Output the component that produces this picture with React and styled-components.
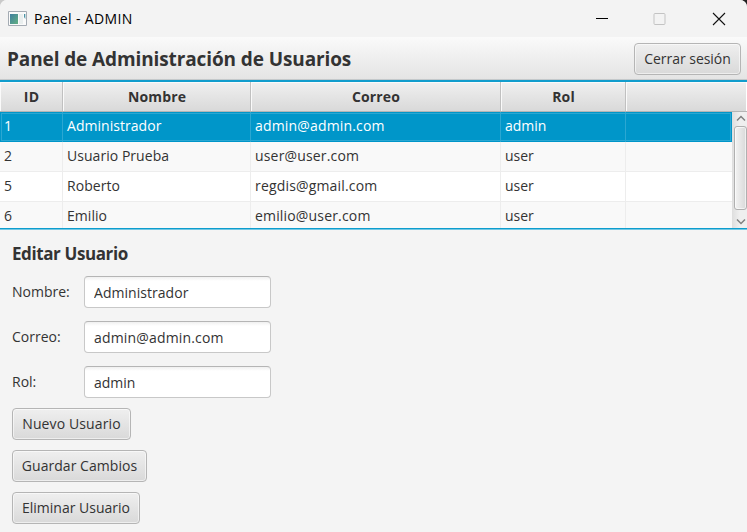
import React from "react";
import styled, { createGlobalStyle } from "styled-components";

const Global = createGlobalStyle`
  * { box-sizing: border-box; }
  html, body { margin: 0; padding: 0; background: #fff; overflow: hidden; }
  button, input { font: inherit; color: inherit; letter-spacing: inherit; }
`;

const Window = styled.div`
  width: 747px;
  height: 532px;
  display: flex;
  flex-direction: column;
  overflow: hidden;
  background: #f4f4f4;
  border-radius: 7px 7px 0 0;
  font-family: "Open Sans", "Noto Sans", sans-serif;
  font-size: 14px;
  letter-spacing: 0;
  color: #333;
  white-space: nowrap;
`;

const Backdrop = styled.div`
  background: linear-gradient(90deg, #c9c9c9 50%, #222 50%);
`;

const TitleBar = styled.header`
  display: flex;
  align-items: center;
  height: 37px;
  flex: none;
  padding-left: 8px;
  background: #f3f3f3;
  color: #000;
`;

const WindowTitle = styled.span`
  flex: 1;
  margin-left: 7px;
  line-height: 20px;
  letter-spacing: 0.35px;
`;

const WindowControls = styled.div`
  display: flex;
  padding-right: 1px;
  svg { display: block; width: 58.5px; height: 36px; }
`;

const ToolBar = styled.div`
  display: flex;
  justify-content: space-between;
  align-items: center;
  height: 43px;
  flex: none;
  padding: 1px 6px 0 7px;
  background: linear-gradient(#fafafa, #e4e4e4);
  border-bottom: 1px solid #c4c8ca;
`;

const Heading = styled.h1`
  margin: 0;
  font-size: 19px;
  line-height: 26px;
  font-weight: 700;
  letter-spacing: -0.11px;
`;

const Button = styled.button`
  width: ${(p) => p.$w}px;
  height: 32px;
  padding: 0 0 1px;
  border: 1px solid #b5b5b5;
  border-radius: 4px;
  background: linear-gradient(#efefef, #d9d9d9);
  box-shadow: inset 0 0 0 1px rgba(255, 255, 255, 0.55);
  letter-spacing: ${(p) => p.$ls ?? 0}px;
`;

const Table = styled.section`
  height: 149px;
  flex: none;
  display: flex;
  flex-direction: column;
  margin-bottom: 1px;
  border-top: 2px solid #119dcd;
  border-bottom: 1px solid #0d9dce;
  box-shadow: 0 1px 0 #74c8e4;
  background: #fff;
`;

const columns = "63px 188px 250px 125px 1fr";

const HeaderRow = styled.div`
  display: grid;
  grid-template-columns: ${columns};
  height: 30px;
  flex: none;
  border-bottom: 1px solid #b5b5b5;
  background: linear-gradient(#f0f0f0, #d9d9d9);
`;

const HeaderCell = styled.div`
  display: flex;
  align-items: center;
  justify-content: center;
  font-weight: 700;
  border-right: 1px solid #c0c0c0;
  box-shadow: inset 1px 1px 0 #fafafa;
  padding-left: 1px;
  letter-spacing: 0.15px;
  &:last-child { border-right-color: #fff; }
`;

const TableBody = styled.div`
  flex: 1;
  min-height: 0;
  display: flex;
`;

const Rows = styled.div`
  flex: 1;
  overflow: hidden;
`;

const Row = styled.div`
  display: grid;
  grid-template-columns: ${columns};
  height: 30px;
  background: ${(p) => (p.$selected ? "#0096c9" : p.$odd ? "#f9f9f9" : "#fff")};
  color: ${(p) => (p.$selected ? "#fff" : "#333")};
  border-bottom: ${(p) => (p.$selected ? "0" : "1px solid #ededed")};
  box-shadow: ${(p) => (p.$selected ? "inset 0 0 0 1px #0096c9, inset 0 0 0 2px #2ba7d2" : "none")};
  --rule: ${(p) => (p.$selected ? "#2ba7d2" : "#ededed")};
`;

const Cell = styled.div`
  padding-left: 4px;
  line-height: 27px;
  border-right: 1px solid var(--rule);
  letter-spacing: ${(p) => p.$ls ?? 0}px;
  &:last-child { border-right: 0; }
`;

const ScrollBar = styled.div`
  width: 15px;
  display: flex;
  flex-direction: column;
  align-items: stretch;
  background: linear-gradient(90deg, #dedede, #efefef 50%);
  padding-left: 2px;
  svg { display: block; width: 13px; }
`;

const Thumb = styled.div`
  flex: 1;
  border: 1px solid #b0b0b0;
  border-radius: 3px;
  background: linear-gradient(90deg, #f3f3f3, #d9d9d9);
  box-shadow: inset 0 0 0 1px rgba(255, 255, 255, 0.6);
`;

const Editor = styled.form`
  display: flex;
  flex-direction: column;
  align-items: flex-start;
  padding: 11px 12px 0;
`;

const SubHeading = styled.h2`
  margin: 0 0 9px;
  font-size: 17px;
  line-height: 26px;
  font-weight: 700;
  letter-spacing: -0.4px;
`;

const Fields = styled.div`
  display: grid;
  grid-template-columns: 72px 187px;
  row-gap: 13px;
  margin-bottom: 10px;
`;

const Label = styled.label`
  line-height: 31px;
`;

const Input = styled.input`
  width: 187px;
  height: 32px;
  padding: 1px 9px 0;
  border: 1px solid #c8c8c8;
  border-top-color: #b5b5b5;
  border-radius: 4px;
  outline: 0;
  background: linear-gradient(#f0f0f0, #fff 4px);
  letter-spacing: ${(p) => p.$ls ?? 0}px;
`;

const Actions = styled.div`
  display: flex;
  flex-direction: column;
  align-items: flex-start;
  gap: 10px;
`;

const users = [
  ["1", "Administrador", "admin@admin.com", "admin"],
  ["2", "Usuario Prueba", "user@user.com", "user"],
  ["5", "Roberto", "regdis@gmail.com", "user"],
  ["6", "Emilio", "emilio@user.com", "user"],
];

const columnSpacing = [0, 0.04, 0.17, 0];

const AppIcon = () => (
  <svg width="19" height="16" viewBox="0 0 19 16">
    <defs>
      <linearGradient id="pane" x1="0" y1="0" x2="1" y2="1">
        <stop offset="0" stopColor="#3f7f9f" />
        <stop offset="1" stopColor="#62b082" />
      </linearGradient>
    </defs>
    <path d="M.5.5h18v14H.5z" fill="#fafafa" stroke="#a4abb3" />
    <path d="M2 3h8v10H2z" fill="url(#pane)" />
    <path d="M11 3h4v10h-4z" fill="#e9eeee" />
    <path d="M16 3h1.3v5l-1.3-2z" fill="#4a93a5" />
  </svg>
);

export default function App() {
  return (
    <Backdrop>
      <Global />
      <Window>
        <TitleBar>
          <AppIcon />
          <WindowTitle>Panel - ADMIN</WindowTitle>
          <WindowControls>
            <svg viewBox="0 0 58.5 36"><path d="M25 17.5h12" stroke="#000" /></svg>
            <svg viewBox="0 0 58.5 36"><rect x="25" y="12.5" width="11" height="11" rx="1" fill="none" stroke="#c3c3c3" /></svg>
            <svg viewBox="0 0 58.5 36"><path d="M25 12l12 12M37 12L25 24" stroke="#111" strokeWidth="1.1" /></svg>
          </WindowControls>
        </TitleBar>
        <ToolBar>
          <Heading>Panel de Administración de Usuarios</Heading>
          <Button $w={107} $ls={-0.03}>Cerrar sesión</Button>
        </ToolBar>
        <Table>
          <HeaderRow>
            <HeaderCell>ID</HeaderCell>
            <HeaderCell>Nombre</HeaderCell>
            <HeaderCell>Correo</HeaderCell>
            <HeaderCell>Rol</HeaderCell>
            <HeaderCell />
          </HeaderRow>
          <TableBody>
            <Rows>
              {users.map((user, i) => (
                <Row key={user[0]} $selected={i === 0} $odd={i % 2 === 1}>
                  {user.map((value, j) => (
                    <Cell key={j} $ls={columnSpacing[j]}>{value}</Cell>
                  ))}
                  <Cell />
                </Row>
              ))}
            </Rows>
            <ScrollBar>
              <svg height="14" viewBox="0 0 13 14"><path d="M3 8.5l4-4 4 4" fill="none" stroke="#808080" strokeWidth="1.5" /></svg>
              <Thumb />
              <svg height="18" viewBox="0 0 13 18"><path d="M3 9.5l4 4 4-4" fill="none" stroke="#808080" strokeWidth="1.5" /></svg>
            </ScrollBar>
          </TableBody>
        </Table>
        <Editor>
          <SubHeading>Editar Usuario</SubHeading>
          <Fields>
            <Label>Nombre:</Label>
            <Input defaultValue="Administrador" $ls={0.04} />
            <Label>Correo:</Label>
            <Input defaultValue="admin@admin.com" $ls={0.17} />
            <Label>Rol:</Label>
            <Input defaultValue="admin" />
          </Fields>
          <Actions>
            <Button type="button" $w={119} $ls={0.12}>Nuevo Usuario</Button>
            <Button type="button" $w={135} $ls={0.04}>Guardar Cambios</Button>
            <Button type="button" $w={128}>Eliminar Usuario</Button>
          </Actions>
        </Editor>
      </Window>
    </Backdrop>
  );
}
